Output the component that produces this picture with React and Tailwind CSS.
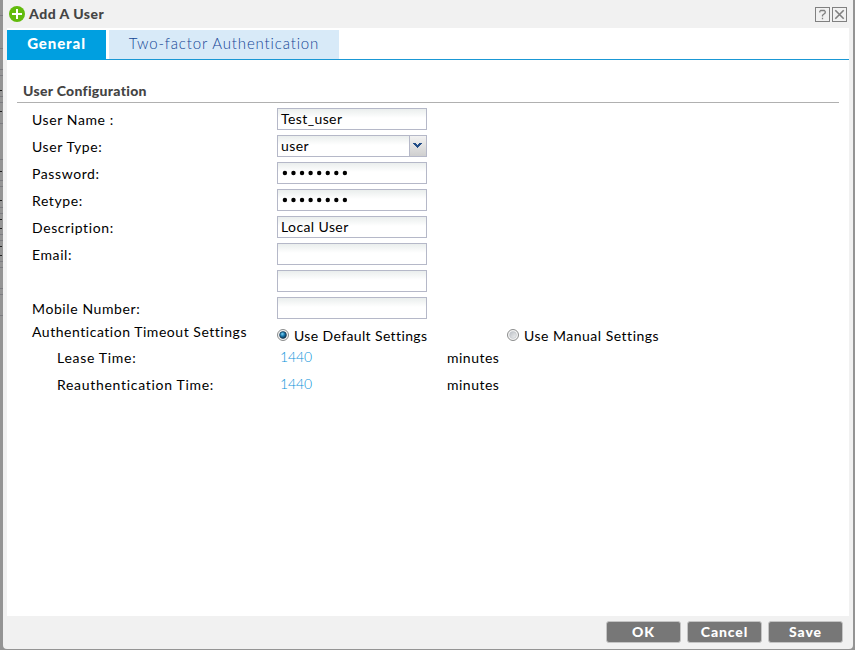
import { useState } from "react";

const FONT = "font-['Lato','Liberation_Sans',sans-serif]";

// ruled lines and row borders of the page that show past the dialog's left edge
const EDGE_LINES = [15, 48, 69, 75, 96, 102, 123, 159, 180, 186, 207, 213, 234, 240, 261, 267, 288, 294, 315];
const EDGE_TEXT = [90, 111, 171, 200, 219, 228, 246, 255];

// ── Icons ───────────────────────────────────────────────────────────
function AddIcon() {
  return (
    <svg width="16" height="16" viewBox="0 0 16 16" className="shrink-0">
      <circle cx="8" cy="8" r="8" fill="#62bb0c" />
      <path d="M8 3v10M3 8h10" stroke="#fff" strokeWidth="2" />
    </svg>
  );
}

function HelpIcon() {
  return (
    <svg width="15" height="15" viewBox="0 0 15 15">
      <rect x="0.5" y="0.5" width="14" height="14" fill="none" stroke="#808080" />
      <path d="M4.8 5.4V4.4L5.7 3.5H9.3L10.2 4.4V6L7.5 8.2V9.4M7.5 10.8v1.4" fill="none" stroke="#808080" strokeWidth="1.3" />
    </svg>
  );
}

function CloseIcon() {
  return (
    <svg width="15" height="15" viewBox="0 0 15 15">
      <rect x="0.5" y="0.5" width="14" height="14" fill="none" stroke="#808080" />
      <path d="M3.3 3.3l8.4 8.4M11.7 3.3l-8.4 8.4" stroke="#808080" strokeWidth="1.6" />
    </svg>
  );
}

function Radio({ checked }) {
  return (
    <svg width="12" height="12" viewBox="0 0 12 12" className="relative -top-px shrink-0">
      <defs>
        <radialGradient id="radio-on" cx="0.4" cy="0.35" r="0.65">
          <stop offset="0" stopColor="#7fd4f5" />
          <stop offset="0.5" stopColor="#1878ae" />
          <stop offset="1" stopColor="#0b3554" />
        </radialGradient>
        <linearGradient id="radio-off" x1="0" y1="0" x2="1" y2="1">
          <stop offset="0" stopColor="#b9bec4" />
          <stop offset="1" stopColor="#f2f2f2" />
        </linearGradient>
      </defs>
      <circle cx="6" cy="6" r="5.5" fill="#f4f4f4" stroke="#8b8c8c" />
      <circle cx="6" cy="6" r="3.4" fill={checked ? "url(#radio-on)" : "url(#radio-off)"} stroke={checked ? "#17364f" : "#c3c7cb"} strokeWidth="0.7" />
    </svg>
  );
}

// ── Form pieces ─────────────────────────────────────────────────────
function Row({ label, children }) {
  return (
    <div className="flex h-[27px] items-start">
      <span className="w-[245px] shrink-0 pt-[3px] leading-[18px] tracking-[0.6px]">{label}</span>
      {children}
    </div>
  );
}

function Field({ children }) {
  return (
    <div className="flex h-[22px] w-[150px] items-center border border-[#b5b8c8] bg-linear-to-b from-[#eaeeed] to-white to-45% pl-[3px] leading-[18px] tracking-[0.4px]">
      {children}
    </div>
  );
}

function Dots() {
  return (
    <svg width="70" height="6" viewBox="0 0 70 6">
      {[0, 1, 2, 3, 4, 5, 6, 7].map((i) => (
        <circle key={i} cx={3.9 + i * 8.57} cy="3" r="2.2" fill="#000" />
      ))}
    </svg>
  );
}

function FooterButton({ children }) {
  return (
    <button className="h-[22px] w-[75px] rounded-[3px] border border-[#c4c4c4] bg-[#777] text-[14px] leading-[20px] font-black tracking-[0.9px] text-white">
      {children}
    </button>
  );
}

export default function App() {
  const [manual, setManual] = useState(false);

  return (
    <div className={`relative flex h-[650px] w-[855px] overflow-hidden bg-[#949494] pr-[2px] pb-px pl-[3px] text-[14px] text-black ${FONT}`}>
      {/* page behind the dialog */}
      {EDGE_LINES.map((y) => (
        <i key={y} className="absolute left-0 h-px w-[3px] bg-[#7c7c80]" style={{ top: y }} />
      ))}
      {EDGE_TEXT.map((y) => (
        <i key={y} className="absolute left-0 h-px w-[2px] bg-[#222]" style={{ top: y }} />
      ))}

      <div className="z-10 flex flex-1 flex-col rounded-b-[4px] bg-[#f1f1f1] px-1">
        <header className="flex h-7 shrink-0 items-center px-[2px]">
          <AddIcon />
          <h1 className="ml-1 text-[14px] leading-[18px] font-black tracking-[0.5px] text-[#444]">Add A User</h1>
          <div className="ml-auto flex gap-[2px]">
            <HelpIcon />
            <CloseIcon />
          </div>
        </header>

        <main className="h-[588px] shrink-0 bg-white pt-[2px]">
          <nav className="flex h-[30px] gap-[3px] border-b border-[#1a98d5] text-[15px] leading-[27px]">
            <button className="h-[30px] w-[99px] bg-[#009fe0] pb-[3px] font-black tracking-[0.9px] text-white">General</button>
            <button className="h-[29px] w-[230px] bg-[#d8eaf8] pb-[2px] font-light tracking-[0.85px] text-[#134595]">Two-factor Authentication</button>
          </nav>

          <h2 className="mx-[10px] h-[43px] border-b border-[#b0b0b0] pt-[22px] pl-[6px] text-[14px] leading-[18px] font-black tracking-[0.3px] text-[#444]">
            User Configuration
          </h2>

          <form className="pt-[5px] pl-[25px]">
            <Row label="User Name :"><Field>Test_user</Field></Row>
            <Row label="User Type:">
              <div className="flex h-[22px] w-[150px] items-center border border-[#b5b8c8] bg-linear-to-b from-[#eaeeed] to-white to-45% pl-[3px] leading-[18px] tracking-[0.4px]">
                user
                <span className="ml-auto flex h-full w-[17px] border-l border-[#b5b8c8] bg-linear-to-b from-[#f2f2f2] to-[#cfcfcf] pt-[7px] pl-[3px]">
                  <svg width="9" height="6" viewBox="0 0 9 6">
                    <path d="M0 0h3v1h1v1h1v-1h1v-1h3v1h-1v1h-1v1h-1v1h-1v1h-1v-1h-1v-1h-1v-1h-1v-1h-1z" fill="#224d87" />
                  </svg>
                </span>
              </div>
            </Row>
            <Row label="Password:"><Field><Dots /></Field></Row>
            <Row label="Retype:"><Field><Dots /></Field></Row>
            <Row label="Description:"><Field>Local User</Field></Row>
            <Row label="Email:"><Field /></Row>
            <Row label=""><Field /></Row>
            <Row label="Mobile Number:"><Field /></Row>

            <div className="-mt-px flex h-6 items-start">
              <span className="w-[245px] leading-[18px] tracking-[0.53px]">Authentication Timeout Settings</span>
              <span className="flex w-[230px] items-center gap-[5px] pt-1 leading-[18px] tracking-[0.38px]" onClick={() => setManual(false)}>
                <Radio checked={!manual} />Use Default Settings
              </span>
              <span className="flex items-center gap-[5px] pt-1 leading-[18px] tracking-[0.5px]" onClick={() => setManual(true)}>
                <Radio checked={manual} />Use Manual Settings
              </span>
            </div>
            {["Lease Time:", "Reauthentication Time:"].map((label) => (
              <div key={label} className="flex h-[27px] items-start pl-[25px] leading-[18px] tracking-[0.7px]">
                <span className="w-[223px] pt-[2px]">{label}</span>
                <span className="w-[167px] pt-px font-light tracking-[-0.1px] text-[#0a93da]">1440</span>
                <span className="pt-[2px] tracking-[0.5px]">minutes</span>
              </div>
            ))}
          </form>
        </main>

        <footer className="flex flex-1 items-start justify-end gap-[6px] pt-[5px] pr-[6px]">
          <FooterButton>OK</FooterButton>
          <FooterButton>Cancel</FooterButton>
          <FooterButton>Save</FooterButton>
        </footer>
      </div>
    </div>
  );
}
